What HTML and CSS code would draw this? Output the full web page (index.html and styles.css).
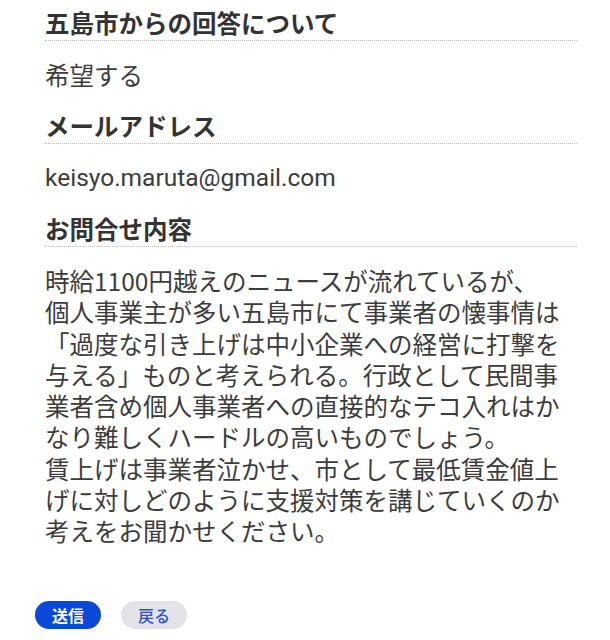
FILE: index.html
```html
<!DOCTYPE html>
<html lang="ja">

<head>
    <meta charset="UTF-8">
    <meta name="viewport" content="width=device-width, initial-scale=1.0">
    <title>お問合せ確認</title>
    <link rel="stylesheet" href="styles.css">
</head>

<body>
    <div class="confirm">
        <dl class="confirm-list">
            <dt>五島市からの回答について</dt>
            <dd>希望する</dd>
            <dt>メールアドレス</dt>
            <dd class="latin">keisyo.maruta@gmail.com</dd>
            <dt>お問合せ内容</dt>
            <dd class="message">時給1100円越えのニュースが流れているが、<br>個人事業主が多い五島市にて事業者の懐事情は「過度な引き上げは中小企業への経営に打撃を与える」ものと考えられる。行政として民間事業者含め個人事業者への直接的なテコ入れはかなり難しくハードルの高いものでしょう。<br>賃上げは事業者泣かせ、市として最低賃金値上げに対しどのように支援対策を講じていくのか考えをお聞かせください。</dd>
        </dl>
        <div class="buttons">
            <button class="btn btn-submit" type="button">送信</button>
            <button class="btn btn-back" type="button">戻る</button>
        </div>
    </div>
</body>

</html>
```

FILE: styles.css
```css
body {
    margin: 0;
    background: #fff;
    font-family: "Noto Sans CJK JP", "Noto Sans", sans-serif;
}

.confirm {
    padding: 6px 33px 0 45px;
}

.confirm-list {
    margin: 0;
}

.confirm-list dt {
    font-size: 24.5px;
    font-weight: bold;
    line-height: 34px;
    color: #333;
    border-bottom: 1px dotted #bbb;
}

.confirm-list dd {
    margin: 18px 0 18px;
    font-size: 24.5px;
    line-height: 32px;
    color: #3c3c3c;
}

.confirm-list .latin {
    font-family: "Roboto", "Noto Sans CJK JP", sans-serif;
}

.confirm-list .message {
    line-height: 31.3px;
}

.buttons {
    display: flex;
    gap: 20px;
    margin: 54px 0 0 -10px;
}

.btn {
    width: 66px;
    height: 28px;
    padding: 0;
    border: none;
    border-radius: 14px;
    font-family: "Noto Sans CJK JP", sans-serif;
    font-size: 16px;
    line-height: 28px;
    cursor: pointer;
}

.btn-submit {
    color: #fff;
    font-weight: bold;
    background: #0a48d8;
}

.btn-back {
    color: #2a55c9;
    font-weight: 500;
    background: #e3e3e8;
}
```
